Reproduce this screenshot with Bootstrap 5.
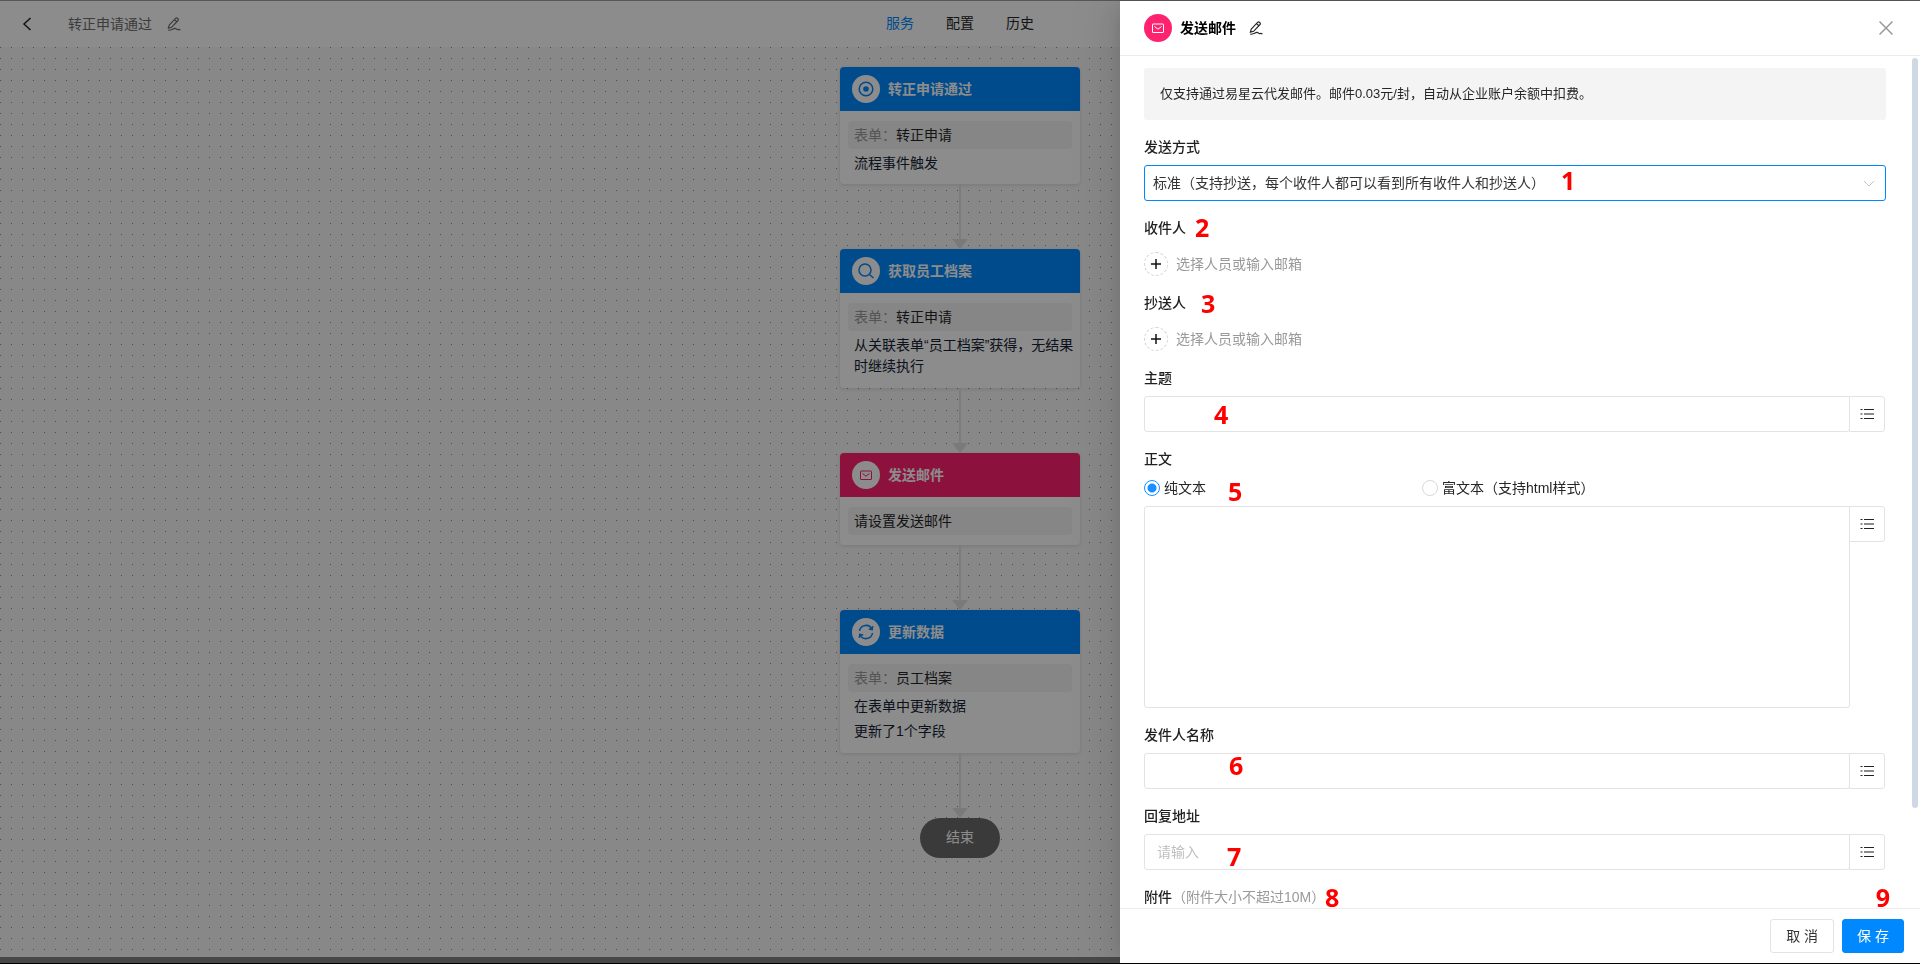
<!DOCTYPE html>
<html lang="zh-CN">
<head>
<meta charset="utf-8">
<meta name="viewport" content="width=device-width, initial-scale=1">
<title>转正申请通过</title>
<link rel="stylesheet" href="https://cdn.jsdelivr.net/npm/bootstrap@5.3.0/dist/css/bootstrap.min.css">
<style>
  body {
    --accent: #0089ff;
    --pink: #ff226f;
    --line: #e3e3e3;
    font: 14px/22px "Liberation Sans", "Noto Sans CJK SC", sans-serif;
    color: #262626;
    background: #fff;
    border-top: 1px solid #585858;
    border-bottom: 1px solid #000;
  }
  svg { display: block; fill: none; stroke: currentColor; }
  label, .field-title { font-weight: 500; }
  .icon-btn { border: 0; padding: 0; background: none; color: inherit; }

  /* flow editor */
  .top-bar { height: 46px; }
  .crumb { color: #6d6d6d; padding-left: 20px; }
  .crumb span { margin: 0 15px 0 34px; }
  .tabs-line { gap: 32px; line-height: 45px; border-bottom: 1px solid #f0f0f0; }
  .tabs-line a { color: #262626; text-decoration: none; }
  .tabs-line a.active { color: var(--accent); }
  .flow {
    padding-top: 20px;
    background: #f8f8f8 url("data:image/svg+xml,%3Csvg xmlns='http://www.w3.org/2000/svg' width='11' height='11'%3E%3Crect width='1' height='1' fill='%238c8c8c'/%3E%3C/svg%3E");
  }
  .h-scroll { height: 6px; background: #838383; }
  .node { width: 240px; background: #fff; border-radius: 4px; box-shadow: 0 1px 4px rgba(0,0,0,.12); overflow: hidden; }
  .node-head { height: 44px; padding: 0 12px; gap: 8px; background: var(--accent); color: #fff; font-weight: 700; }
  .node-head.mail { background: var(--pink); }
  .disc { width: 28px; height: 28px; border-radius: 50%; background: #fff; color: var(--accent); }
  .mail .disc { color: var(--pink); }
  .node-body { padding: 10px 4px 10px 8px; line-height: 21px; }
  .node-body p { margin: 4px 0 0; padding-left: 6px; color: #132333; }
  .node-row { height: 28px; line-height: 28px; margin-right: 4px; padding-left: 6px; border-radius: 4px; background: #f5f5f5; }
  .node-row span { color: #999; }
  .node-body.tall { padding-bottom: 11px; }
  .link-line { width: 2px; height: 55px; background: #e2e2e2; }
  .link-tip { border: 8px solid transparent; border-top: 10px solid #dedede; border-bottom: 0; }
  .end-node { width: 80px; height: 40px; line-height: 38px; border-radius: 20px; background: #6b6b6b; color: #fff; }

  /* side panel */
  .offcanvas-backdrop.show { top: 1px; bottom: 1px; width: auto; height: auto; right: 0; opacity: .45; }
  .offcanvas.panel {
    --bs-offcanvas-width: 800px;
    top: 1px; bottom: 1px; border: 0; color: #262626; outline: 0;
    box-shadow: -6px 0 16px -8px rgba(0,0,0,.12), -9px 0 28px rgba(0,0,0,.08), -12px 0 48px 16px rgba(0,0,0,.04);
  }
  .panel-head { height: 55px; padding: 0 27px 0 24px; border-bottom: 1px solid #ececec; }
  .panel-head .disc { background: var(--pink); color: #fff; }
  .panel-head h1 { font-size: 14px; line-height: 22px; font-weight: 700; margin: 0 13px 0 8px; color: #000; }
  .panel-main { padding: 12px 34px 0 24px; overflow: hidden; }
  .panel-foot { height: 55px; padding: 0 16px; gap: 8px; border-top: 1px solid #ececec; }
  .thumb { top: 2px; right: 2px; width: 6px; height: 88%; border-radius: 3px; background: #cfd9e6; }
  .notice { padding: 15px 16px; font-size: 13px; border-radius: 3px; background: #f4f4f4; }
  .field { margin-top: 16px; }
  .field-title { display: block; margin-bottom: 7px; font-size: 14px; line-height: 22px; color: #1f1f1f; }
  .field-title span { color: #999; }
  .panel .form-control, .panel .form-select { height: 36px; padding: 0 12px; font-size: 14px; border-color: var(--line); border-radius: 3px; color: #333; }
  .panel .form-control::placeholder { color: #bfbfbf; }
  .panel .form-select {
    padding: 0 8px; border-color: var(--accent);
    background: #fff url("data:image/svg+xml,%3Csvg xmlns='http://www.w3.org/2000/svg' width='12' height='12' fill='none' stroke='%23c4c4c4'%3E%3Cpath d='M1 4l5 5 5-5'/%3E%3C/svg%3E") no-repeat right 10px center / 12px 12px;
  }
  .panel textarea.form-control { height: 202px; resize: none; }
  .joined { padding-right: 1px; }
  .joined .form-control { border-top-right-radius: 0; }
  .pick { width: 36px; height: 36px; padding: 0; margin-left: -1px; border: 1px solid var(--line); border-radius: 0 3px 3px 0; background: #fff; color: #222; }
  .adder { gap: 8px; margin-top: 13px; line-height: 24px; border: 0; padding: 0; background: none; color: #999; }
  .adder i { width: 24px; height: 24px; border: 1px dashed #d5d5d5; border-radius: 50%; color: #111; }
  .body-kind { margin-bottom: 7px; }
  .choice { gap: 4px; width: 278px; }
  .choice label { font-weight: 400; }
  .choice input { appearance: none; width: 16px; height: 16px; margin: 0; border: 1px solid #d9d9d9; border-radius: 50%; background: #fff; }
  .choice input:checked { border-color: #1890ff; background: radial-gradient(circle, #1890ff 4px, #fff 5px); }
  .foot-btn { height: 34px; padding: 0 15px; border: 1px solid var(--line); border-radius: 3px; background: #fff; font-size: 14px; line-height: 22px; color: #333; white-space: pre; }
  .foot-btn.primary { padding: 0 14px; border-color: var(--accent); background: var(--accent); color: #fff; }

  /* numbered callouts laid over the form */
  .pin { position: absolute; font: 700 25px/25px "Open Sans", sans-serif; color: #f00; }
  .pin-1 { left: 441px; top: 167px; }
  .pin-2 { left: 75px; top: 214px; }
  .pin-3 { left: 81px; top: 290px; }
  .pin-4 { left: 94px; top: 401px; }
  .pin-5 { left: 108px; top: 478px; }
  .pin-6 { left: 109px; top: 752px; }
  .pin-7 { left: 107px; top: 843px; }
  .pin-8 { left: 205px; top: 884px; }
  .pin-9 { right: 30px; top: 884px; }
</style>
</head>
<body class="vh-100 d-flex flex-column overflow-hidden">

<svg class="d-none" aria-hidden="true">
  <symbol id="pencil" viewBox="0 0 14 14"><path d="M2.2 8.2L8.8 1.2Q9.6.6 10.4 1.3L11 1.9Q11.7 2.7 11 3.5L4.6 10.3L1.4 11.2ZM7.6 2.6L9.8 4.7M1.2 13.2C4 13.6 6 11.600 8 11.400C9.600 11.300 9.500 12.900 11 12.600Q12.200 12.200 13.400 12.900" stroke-width="1.200"/></symbol>
  <symbol id="mail" viewBox="0 0 14 14"><rect x="1.500" y="3" width="11" height="8.500" rx=".5"/><path d="M3.500 5.500L7 8.200L10.500 5.500"/></symbol>
  <symbol id="list" viewBox="0 0 14 12"><path d="M4 1.500H14M4 10.500H14M.5 1.500H2.500M.5 6H2.500M.5 10.500H2.500"/><path d="M4 6H14" stroke-width="2" stroke="#8c8c8c"/></symbol>
  <symbol id="plus" viewBox="0 0 10 10"><path d="M0 5H10M5 0V10" stroke-width="1.500"/></symbol>
</svg>

<header class="top-bar position-relative d-flex align-items-center justify-content-center flex-shrink-0">
  <div class="crumb position-absolute start-0 d-flex align-items-center">
    <button class="icon-btn text-dark" aria-label="返回"><svg width="14" height="14"><path d="M10.500 1L4 7L10.500 13" stroke-width="1.500"/></svg></button>
    <span>转正申请通过</span>
    <button class="icon-btn" aria-label="重命名"><svg width="14" height="14"><use href="#pencil"/></svg></button>
  </div>
  <nav class="tabs-line d-flex">
    <a href="#" class="active">服务</a><a href="#">配置</a><a href="#">历史</a>
  </nav>
</header>

<main class="flow flex-grow-1 d-flex flex-column align-items-center">
  <section class="node">
    <div class="node-head d-flex align-items-center">
      <span class="disc d-flex align-items-center justify-content-center"><svg width="16" height="16" stroke-width="1.500"><circle cx="8" cy="8" r="6.800"/><circle cx="8" cy="8" r="2.800" fill="currentColor" stroke="none"/></svg></span>转正申请通过
    </div>
    <div class="node-body"><div class="node-row"><span>表单：</span>转正申请</div><p>流程事件触发</p></div>
  </section>
  <div class="link-line"></div><div class="link-tip"></div>

  <section class="node">
    <div class="node-head d-flex align-items-center">
      <span class="disc d-flex align-items-center justify-content-center"><svg width="16" height="16" stroke-width="1.500"><circle cx="7" cy="7" r="6"/><path d="M11.500 11.500L15.500 15"/></svg></span>获取员工档案
    </div>
    <div class="node-body tall"><div class="node-row"><span>表单：</span>转正申请</div><p>从关联表单“员工档案”获得，无结果时继续执行</p></div>
  </section>
  <div class="link-line"></div><div class="link-tip"></div>

  <section class="node">
    <div class="node-head mail d-flex align-items-center">
      <span class="disc d-flex align-items-center justify-content-center"><svg width="14" height="14"><use href="#mail"/></svg></span>发送邮件
    </div>
    <div class="node-body"><div class="node-row">请设置发送邮件</div></div>
  </section>
  <div class="link-line"></div><div class="link-tip"></div>

  <section class="node">
    <div class="node-head d-flex align-items-center">
      <span class="disc d-flex align-items-center justify-content-center"><svg width="16" height="16" stroke-width="1.500"><path d="M1.500 7A6.600 6.600 0 0 1 14 5.200M14.500 9A6.600 6.600 0 0 1 2 10.800M14.700 2.200L14.200 5.600L10.800 5M1.300 13.800L1.800 10.400L5.200 11"/></svg></span>更新数据
    </div>
    <div class="node-body tall"><div class="node-row"><span>表单：</span>员工档案</div><p>在表单中更新数据</p><p>更新了1个字段</p></div>
  </section>
  <div class="link-line"></div><div class="link-tip"></div>
  <div class="end-node text-center">结束</div>
</main>
<div class="h-scroll flex-shrink-0"></div>

<div class="offcanvas-backdrop show"></div>

<aside class="offcanvas offcanvas-end show panel" tabindex="-1" data-bs-backdrop="false" data-bs-scroll="true" aria-labelledby="panelTitle">
  <div class="panel-head d-flex align-items-center flex-shrink-0">
    <span class="disc d-flex align-items-center justify-content-center"><svg width="14" height="14"><use href="#mail"/></svg></span>
    <h1 id="panelTitle">发送邮件</h1>
    <button class="icon-btn" aria-label="重命名"><svg width="14" height="14"><use href="#pencil"/></svg></button>
    <button class="icon-btn ms-auto" aria-label="关闭"><svg width="14" height="14" stroke-width="1.500"><path d="M.5.5L13.500 13.500M13.500.5L.5 13.500" stroke="#999"/></svg></button>
  </div>

  <form class="panel-main position-relative flex-grow-1">
    <div class="notice">仅支持通过易星云代发邮件。邮件0.03元/封，自动从企业账户余额中扣费。</div>

    <div class="field">
      <label class="field-title" for="mode">发送方式</label>
      <select id="mode" class="form-select shadow-none"><option>标准（支持抄送，每个收件人都可以看到所有收件人和抄送人）</option></select>
    </div>
    <div class="field">
      <span class="field-title">收件人</span>
      <button type="button" class="adder d-flex align-items-center"><i class="d-flex align-items-center justify-content-center"><svg width="10" height="10"><use href="#plus"/></svg></i>选择人员或输入邮箱</button>
    </div>
    <div class="field">
      <span class="field-title">抄送人</span>
      <button type="button" class="adder d-flex align-items-center"><i class="d-flex align-items-center justify-content-center"><svg width="10" height="10"><use href="#plus"/></svg></i>选择人员或输入邮箱</button>
    </div>
    <div class="field">
      <label class="field-title" for="subject">主题</label>
      <div class="joined d-flex"><input id="subject" class="form-control"><button type="button" class="pick d-flex flex-shrink-0 align-items-center justify-content-center" aria-label="选择字段"><svg width="14" height="12"><use href="#list"/></svg></button></div>
    </div>
    <div class="field">
      <label class="field-title" for="content">正文</label>
      <div class="d-flex body-kind">
        <div class="choice d-flex align-items-center"><input type="radio" name="kind" id="plain" checked><label for="plain">纯文本</label></div>
        <div class="choice d-flex align-items-center"><input type="radio" name="kind" id="rich"><label for="rich">富文本（支持html样式）</label></div>
      </div>
      <div class="joined d-flex align-items-start"><textarea id="content" class="form-control"></textarea><button type="button" class="pick d-flex flex-shrink-0 align-items-center justify-content-center" aria-label="选择字段"><svg width="14" height="12"><use href="#list"/></svg></button></div>
    </div>
    <div class="field">
      <label class="field-title" for="sender">发件人名称</label>
      <div class="joined d-flex"><input id="sender" class="form-control"><button type="button" class="pick d-flex flex-shrink-0 align-items-center justify-content-center" aria-label="选择字段"><svg width="14" height="12"><use href="#list"/></svg></button></div>
    </div>
    <div class="field">
      <label class="field-title" for="reply">回复地址</label>
      <div class="joined d-flex"><input id="reply" class="form-control" placeholder="请输入"><button type="button" class="pick d-flex flex-shrink-0 align-items-center justify-content-center" aria-label="选择字段"><svg width="14" height="12"><use href="#list"/></svg></button></div>
    </div>
    <div class="field">
      <div class="field-title mb-0">附件<span class="fw-normal">（附件大小不超过10M）</span></div>
    </div>

    <div class="thumb position-absolute"></div>
  </form>

  <div class="panel-foot d-flex align-items-center justify-content-end flex-shrink-0">
    <button class="foot-btn">取 消</button>
    <button class="foot-btn primary">保 存</button>
  </div>

  <span class="pin pin-1">1</span><span class="pin pin-2">2</span><span class="pin pin-3">3</span>
  <span class="pin pin-4">4</span><span class="pin pin-5">5</span><span class="pin pin-6">6</span>
  <span class="pin pin-7">7</span><span class="pin pin-8">8</span><span class="pin pin-9">9</span>
</aside>

<script src="https://cdn.jsdelivr.net/npm/bootstrap@5.3.0/dist/js/bootstrap.bundle.min.js"></script>
</body>
</html>
